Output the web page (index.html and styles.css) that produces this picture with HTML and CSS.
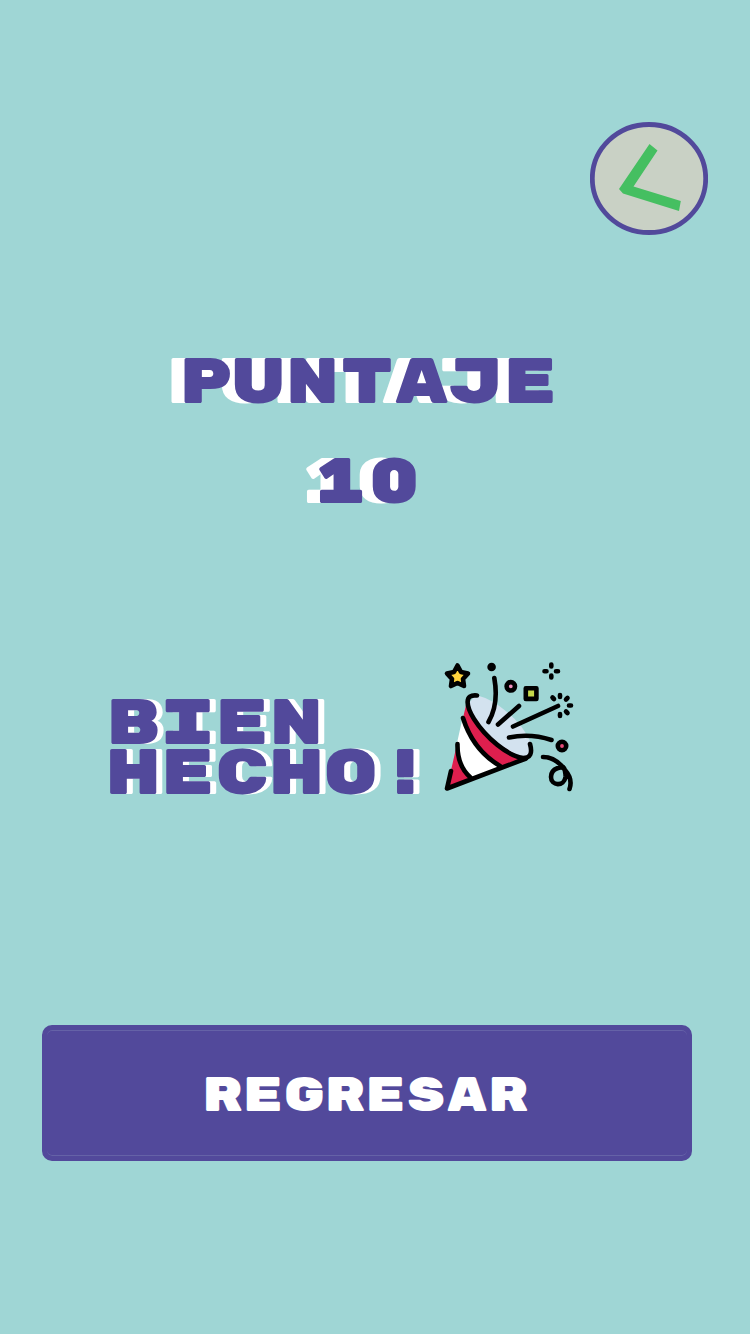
FILE: index.html
```html
<!DOCTYPE html>
<html lang="es">
<head>
<meta charset="utf-8">
<meta name="viewport" content="width=device-width, initial-scale=1">
<title>Puntaje</title>
<link rel="stylesheet" href="styles.css">
</head>
<body>
<main class="screen">
  <header class="topbar">
    <button class="back" type="button" aria-label="Volver">
      <svg class="back-icon" viewBox="0 0 118 113" aria-hidden="true">
        <ellipse cx="59" cy="56.5" rx="56.7" ry="54" fill="#c9d1c5" stroke="#52499b" stroke-width="4.8"/>
        <path d="M59.500 22 L67.500 28.500 L43.500 64.500 L90.800 79 L89 89 L33 71.500 L29 67 Z" fill="#45bf61"/>
      </svg>
    </button>
  </header>
  <section class="score">
    <h1 class="display">PUNTAJE</h1>
    <p class="display">10</p>
  </section>
  <section class="praise">
    <h2 class="display praise-text">BIEN<br>HECHO!</h2>
    <svg class="party" viewBox="440 658 136 136" aria-hidden="true">
      <path d="M476 695 Q492 699 507 712 Q523 725 531 743 L532 756 L519 757 Q480 735 468 704 Z" fill="#d3e2ef"/>
      <path d="M466 705 Q477 735 521 757 L527 760 L500 768 Q476 755 463 718 Z" fill="#de1f4e"/>
      <path d="M463 716 Q476 752 500 767 L471 778 Q458 764 457 743 Z" fill="#fff"/>
      <path d="M457 744 Q459 768 471 778 L447 788 Z" fill="#de1f4e"/>
      <g fill="none" stroke="#000" stroke-width="4.600" stroke-linecap="round" stroke-linejoin="round">
        <path d="M477 695.500 C464 694 466 706 474 719 C486 738 508 756 523 758 Q534 758 530 744"/>
        <path d="M463 718 Q473 750 500 766 M457.500 744 Q457 766 471 778 M451 771 L447 788.500 L526 758.500"/>
        <path d="M494.300 678 Q499 704 488.500 722 M498 724.500 L519 706 M513 726.500 L558 706 M509 737.500 Q530 733 551.500 740"/>
        <path d="M543 757 C552 757 560 763 565 770 M565 770 C563 765 551 768 551 777 C551 786 564 787 565.500 777 C566 770 563 767 563 767 M565 770 Q573 779 569.500 789"/>
        <path d="M457.500 665.500 L461 672 L468 673.500 L463 679 L464 686 L457.500 683 L451 686 L452 679 L447 673.500 L454 672 Z" fill="#ffd33d"/>
        <rect x="525.800" y="688.300" width="10.600" height="10.600" fill="#c5d84a"/>
        <circle cx="510.800" cy="686.300" r="4.200" fill="#ef8dbd"/>
        <circle cx="562" cy="746" r="4.200" fill="#e84a78"/>
        <path d="M551.300 664.500 v2 M551.300 675.500 v2 M544.500 671.200 h2 M556 671.200 h2 M560 695 v2 M560 714 v2 M552.500 697.500 l1.500 1.500 M566 699.500 l1.500 -1.500 M569 705.500 h2 M566 711.500 l1.500 1.500"/>
      </g>
      <circle cx="491.600" cy="667" r="4.300"/>
    </svg>
  </section>
  <button class="return" type="button">REGRESAR</button>
</main>
</body>
</html>
```
FILE: styles.css
```css
* {
  box-sizing: border-box;
}

body {
  margin: 0;
  min-height: 100vh;
  background: #9fd6d5;
  color: #52499b;
  font-family: "Rubik Mono One", Inter, "Liberation Sans", sans-serif;
}

.screen {
  display: flex;
  flex-direction: column;
  padding: 122px 58px 173px 42px;
}

.topbar {
  display: flex;
  justify-content: flex-end;
  margin-right: -16px;
}

.back {
  padding: 0;
  border: 0;
  background: none;
}

.back-icon {
  display: block;
  width: 118px;
  height: 113px;
}

.display {
  margin: 0;
  font-size: 64px;
  font-weight: 400;
  line-height: 50px;
  text-shadow: -13px 0 #fff;
}

.score {
  display: flex;
  flex-direction: column;
  align-items: center;
  gap: 50px;
  margin-top: 123px;
}

.praise {
  display: flex;
  align-items: flex-start;
  gap: 8px;
  margin-top: 150px;
  padding-left: 64px;
}

.praise-text {
  padding-top: 41px;
  text-shadow: 6px 0 #fff;
}

.party {
  flex: none;
  width: 136px;
  height: 136px;
}

.return {
  width: 100%;
  height: 136px;
  margin-top: 226px;
  padding: 6px 4px 0 0;
  border: 5px solid #52499b;
  border-radius: 10px;
  background: #52499b;
  box-shadow: inset 0 1px #6562a7, inset 0 -1px #6562a7;
  color: #fff;
  font-family: inherit;
  font-size: 48px;
  font-weight: 400;
  line-height: 56px;
}
```
